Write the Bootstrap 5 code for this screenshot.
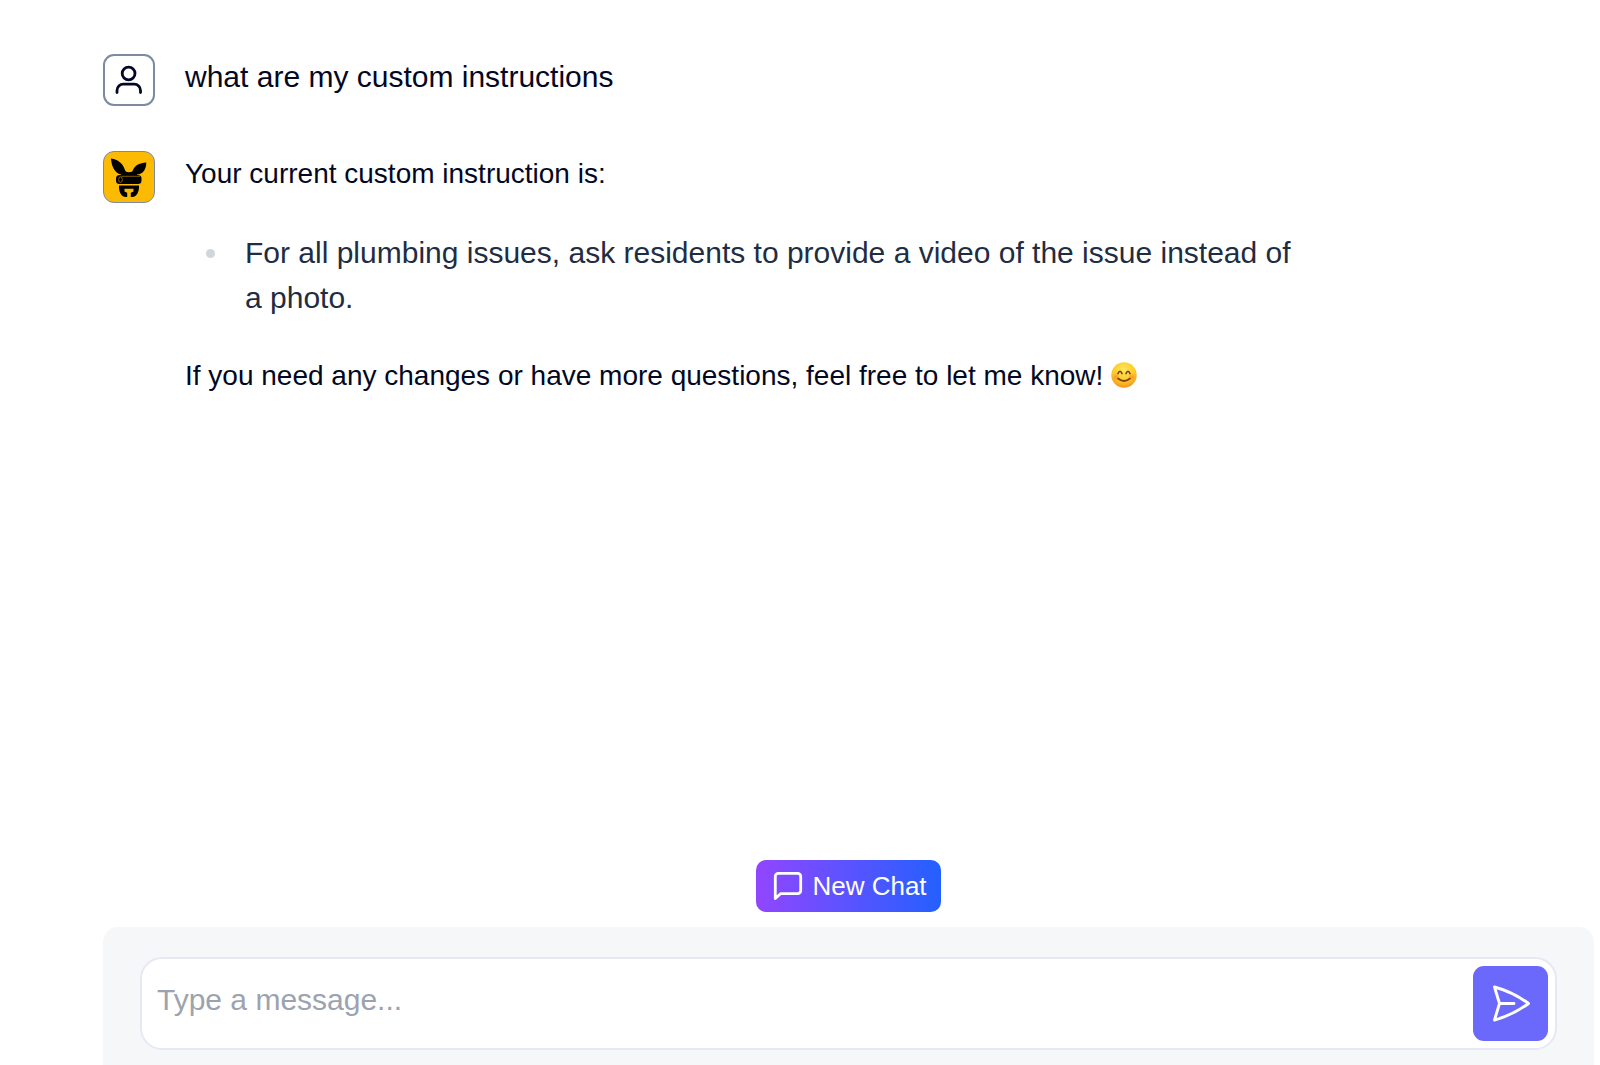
<!DOCTYPE html>
<html lang="en">
<head>
<meta charset="utf-8">
<meta name="viewport" content="width=device-width, initial-scale=1">
<title>Chat</title>
<link href="https://cdn.jsdelivr.net/npm/bootstrap@5.3.0/dist/css/bootstrap.min.css" rel="stylesheet">
<style>
body { font-family: "Liberation Sans", Arial, sans-serif; color: #020824; }
.chat-app { padding: 54px 6px 0 103px; }
.message-list { gap: 45px; max-width: 1200px; }
.message-row { gap: 30px; }
.avatar { width: 52px; height: 52px; border: 2px solid #7c8ba1; border-radius: 11px; }
.avatar-bot { background: #fdba02; border-width: 1px; }
.message-text { font-size: 28px; line-height: 46px; }
.message-user { font-size: 30px; }
.instruction-list { margin: 33px 0; font-size: 30px; line-height: 45px; color: #1f2d43; }
.instruction-list li { gap: 30px; padding-left: 21px; }
.instruction-list li::before { content: ""; flex: none; width: 9px; height: 9px; margin-top: 19px; border-radius: 50%; background: #d1d5de; }
.emoji { width: 26px; height: 26px; margin-top: -6px; }
.btn.new-chat { height: 52px; padding: 0 14px 0 16px; gap: 8px; border: 0; border-radius: 10px; font-size: 26px; line-height: 40px; color: #fff; background: linear-gradient(90deg, #9146ff, #2460ff); }
.composer { margin-top: 15px; height: 138px; padding: 30px 37px 0; border-radius: 15px 15px 0 0; background: #f6f7f9; }
.message-box { height: 93px; padding: 0 7px 0 15px; border: 2px solid #e6e8f4; border-radius: 22px; background: #fff; }
.form-control.message-input { height: 75px; padding: 0 0 8px; border: 0; font-size: 30px; line-height: 45px; background: none; box-shadow: none; color: #020824; }
.message-input::placeholder { color: #9ca3af; opacity: 1; line-height: 45px; }
.btn.send-button { width: 75px; height: 75px; border: 0; border-radius: 11px; background: #6b69fb; }
</style>
</head>
<body>
<div class="chat-app d-flex flex-column min-vh-100">
  <main class="message-list d-flex flex-column flex-grow-1">
    <article class="message-row d-flex align-items-start">
      <div class="avatar flex-shrink-0 d-flex align-items-center justify-content-center">
        <svg width="48" height="48" viewBox="0 0 48 48" fill="none" stroke="#020824" stroke-width="2.8" stroke-linecap="round" aria-hidden="true"><circle cx="23.600" cy="17.500" r="6.400"/><path d="M12 36.500v-2a6.300 6.300 0 0 1 6.300-6.300h10.900a6.300 6.300 0 0 1 6.300 6.300v2"/></svg>
      </div>
      <p class="message-text message-user mb-0">what are my custom instructions</p>
    </article>
    <article class="message-row d-flex align-items-start">
      <div class="avatar avatar-bot flex-shrink-0 d-flex align-items-center justify-content-center">
        <svg width="50" height="50" viewBox="1 1 50 50" aria-hidden="true">
          <path d="M8 7.500C15 8.500 20 12.500 22 19C22.400 20.500 23.500 21.200 26 21.200C28.500 21.200 29.500 20.500 30 19C32 14 37 12 43.300 11.500C43.300 18 40 23.400 34 23.600V25H18V23.600C11.500 22 8.500 15 8 7.500Z"/>
          <rect x="13" y="24" width="25.500" height="9" rx="3.500"/>
          <path d="M37 25.300H18.500M17.500 25.800A1.800 2.700 0 1 0 17.500 31.400A1.800 2.700 0 0 0 17.500 25.800Z" fill="none" stroke="#fdba02" stroke-width=".5"/>
          <path d="M16 34.500H36C36.300 40 34.300 46 29 46H27.800V41.800L30.500 40.500V37.800H21.500V40.500L24.200 41.800V46H23C17.700 46 15.700 40 16 34.500Z"/>
        </svg>
      </div>
      <div class="message-text">
        <p class="mb-0">Your current custom instruction is:</p>
        <ul class="instruction-list list-unstyled">
          <li class="d-flex"><span>For all plumbing issues, ask residents to provide a video of the issue instead of a photo.</span></li>
        </ul>
        <p class="mb-0">If you need any changes or have more questions, feel free to let me know!
          <svg class="emoji" viewBox="0 0 26 26" role="img" aria-label="Smiling face">
            <defs><radialGradient id="face" cx=".5" cy=".3" r=".72"><stop offset="0" stop-color="#ffe85c"/><stop offset=".6" stop-color="#ffc928"/><stop offset="1" stop-color="#f39118"/></radialGradient>
            <radialGradient id="blush"><stop stop-color="#fb7f2b" stop-opacity=".7"/><stop offset="1" stop-color="#fb7f2b" stop-opacity="0"/></radialGradient></defs>
            <circle cx="13" cy="13" r="12.700" fill="url(#face)"/>
            <circle cx="5" cy="15" r="4" fill="url(#blush)"/><circle cx="21" cy="15" r="4" fill="url(#blush)"/>
            <path d="M7 11.500Q9 7 11 11.500M15 11.500Q17 7 19 11.500M7 16.500Q13 21.500 19 16.500" fill="none" stroke="#7a4211" stroke-width="1.700" stroke-linecap="round"/>
          </svg></p>
      </div>
    </article>
  </main>
  <button type="button" class="btn new-chat d-flex align-items-center align-self-center">
    <svg width="32" height="32" viewBox="0 0 32 32" fill="none" stroke="#fff" stroke-width="2.800" stroke-linejoin="round" aria-hidden="true"><path d="M3.300 28.500V6.300A3 3 0 0 1 6.300 3.300H25.700A3 3 0 0 1 28.700 6.300V20.700A3 3 0 0 1 25.700 23.700H8.500Z"/></svg>
    <span>New Chat</span>
  </button>
  <form class="composer">
    <div class="message-box d-flex align-items-center">
      <input class="form-control message-input" type="text" placeholder="Type a message..." aria-label="Message">
      <button type="submit" class="btn send-button flex-shrink-0 d-flex align-items-center justify-content-center p-0" aria-label="Send">
        <svg width="40" height="40" viewBox="0 0 40 40" fill="none" stroke="#fff" stroke-width="2.900" stroke-linecap="round" stroke-linejoin="round" aria-hidden="true"><path d="M3.500 3Q22 8 37.500 19.500Q22 31 3.500 36L8.500 19.500ZM8.500 19.500H23"/></svg>
      </button>
    </div>
  </form>
</div>
<script src="https://cdn.jsdelivr.net/npm/bootstrap@5.3.0/dist/js/bootstrap.bundle.min.js"></script>
</body>
</html>
